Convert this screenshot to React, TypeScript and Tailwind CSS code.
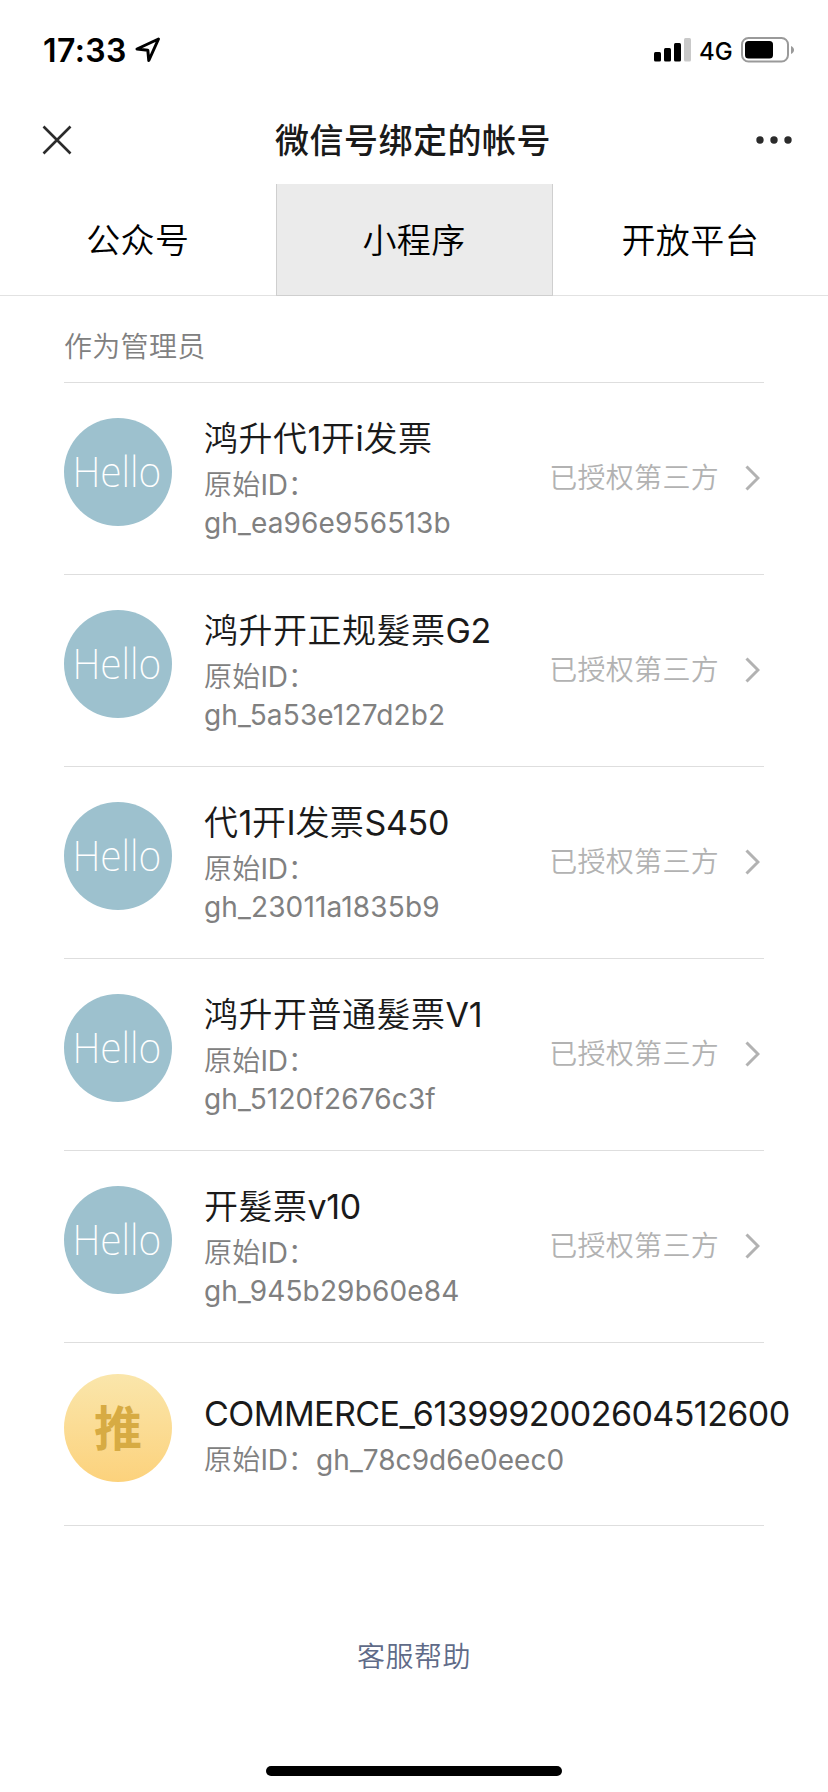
interface Account {
  id: string;
  name: string;
  authorized: boolean;
}

const tabs = ['公众号', '小程序', '开放平台'];

const accounts: Account[] = [
  { id: 'gh_ea96e956513b', name: '鸿升代1开i发票', authorized: true },
  { id: 'gh_5a53e127d2b2', name: '鸿升开正规髮票G2', authorized: true },
  { id: 'gh_23011a1835b9', name: '代1开I发票S450', authorized: true },
  { id: 'gh_5120f2676c3f', name: '鸿升开普通髮票V1', authorized: true },
  { id: 'gh_945b29b60e84', name: '开髮票v10', authorized: true },
  { id: 'gh_78c9d6e0eec0', name: 'COMMERCE_6139992002604512600', authorized: false },
];

function StatusBar() {
  return (
    <div className="flex h-[100px] items-center justify-between pl-[43px] pr-[34px]">
      <div className="flex items-center gap-2">
        <span className="pt-[2px] text-[32px] font-semibold leading-none tracking-[0.4px]">17:33</span>
        <svg className="h-[26px] w-[26px]" viewBox="0 0 26 26" fill="none" stroke="#000" strokeWidth="3" strokeLinejoin="round">
          <path d="M23.500 2L2 12l10.800 1.200L13.800 23.500z" />
        </svg>
      </div>
      <div className="flex items-center">
        <svg className="h-6 w-[37px]" viewBox="0 0 37 24">
          <rect x="0" y="14" width="7" height="9.500" rx="1.500" />
          <rect x="10" y="10" width="7" height="13.500" rx="1.500" />
          <rect x="20" y="5" width="7" height="18.500" rx="1.500" />
          <rect x="30" y="0" width="7" height="23.500" rx="1.500" fill="#c9c9c9" />
        </svg>
        <span className="ml-2 w-[35px] pt-[3px] text-2xl font-medium leading-none">4G</span>
        <svg className="ml-[7px] h-[26px] w-[53px]" viewBox="0 0 53 26">
          <rect x="1" y="1" width="46" height="23.500" rx="6.500" fill="none" stroke="#9a9a9a" strokeWidth="2" />
          <rect x="4" y="4" width="28" height="17.500" rx="3.500" />
          <path d="M50 9c4 1.500 4 6.500 0 8z" fill="#9a9a9a" />
        </svg>
      </div>
    </div>
  );
}

function NavBar() {
  return (
    <div className="flex h-[84px] items-center justify-between px-[42px] pb-[5px]">
      <svg className="h-[30px] w-[30px]" viewBox="0 0 30 30" stroke="#2b2b2b" strokeWidth="2.6">
        <path d="M1.500 1.500l27 27M28.500 1.500l-27 27" />
      </svg>
      <h1 className="pr-[2px] pt-[2px] text-[34px] font-medium leading-none tracking-[0.5px] text-[#1a1a1a]">微信号绑定的帐号</h1>
      <svg className="-mr-[6px] h-2 w-9" viewBox="0 0 36 8" fill="#2b2b2b">
        <circle cx="4" cy="4" r="3.700" />
        <circle cx="18" cy="4" r="3.700" />
        <circle cx="32" cy="4" r="3.700" />
      </svg>
    </div>
  );
}

function Avatar({ authorized }: { authorized: boolean }) {
  if (!authorized) {
    return (
      <div className="flex h-[108px] w-[108px] shrink-0 items-center justify-center rounded-full bg-linear-to-b from-[#fae6ab] to-[#fcd27c] pt-[2px] text-[48px] font-bold leading-none text-[#d7ab43]">
        推
      </div>
    );
  }
  return (
    <div className="flex h-[108px] w-[108px] shrink-0 items-center justify-center rounded-full bg-[#9dc1ce] pb-[3px] pr-[2px]">
      <span className="scale-x-[0.91] font-['Noto_Sans',sans-serif] text-[43px] font-extralight leading-none text-white">Hello</span>
    </div>
  );
}

// Latin runs sit one step heavier than the Chinese text around them
function MixedText({ text }: { text: string }) {
  return text.split(/([\x21-\x7e]+)/).map((part, i) =>
    i % 2 === 1 ? (
      <span key={i} className="font-normal tracking-[-0.3px]">{part}</span>
    ) : (
      part
    )
  );
}

function AccountRow({ account }: { account: Account }) {
  if (!account.authorized) {
    return (
      <li className="flex h-[183px] border-b border-[#dedede] pt-[31px]">
        <Avatar authorized={false} />
        <div className="ml-8 pt-[17px]">
          <p className="whitespace-nowrap text-[34px] font-normal leading-[46px] tracking-[-0.55px] text-[#1a1a1a]">{account.name}</p>
          <p className="whitespace-nowrap text-[28px] leading-[46px] tracking-[0.3px] text-[#808080]">
            <MixedText text="原始ID：" />
            <span className="font-normal tracking-[0.05px]">{account.id}</span>
          </p>
        </div>
      </li>
    );
  }
  return (
    <li className="flex h-48 border-b border-[#dedede] pt-[35px]">
      <Avatar authorized />
      <div className="ml-8 flex-1">
        <p className="whitespace-nowrap text-[34px] leading-[42px] tracking-[0.5px] text-[#1a1a1a]">
          <MixedText text={account.name} />
        </p>
        <div className="mt-[6px] text-[28px] leading-[38px] tracking-[0.3px] text-[#808080]">
          <p><MixedText text="原始ID：" /></p>
          <p className="font-normal tracking-[0.15px]">{account.id}</p>
        </div>
      </div>
      <div className="flex h-[120px] items-center gap-[26px] pr-1">
        <span className="text-[28px] leading-none tracking-[0.3px] text-[#b2b2b2]">已授权第三方</span>
        <svg className="h-[26px] w-[15px]" viewBox="0 0 15 26" fill="none" stroke="#b2b2b2" strokeWidth="3">
          <path d="M1.500 1.500L13 13 1.500 24.500" />
        </svg>
      </div>
    </li>
  );
}

export default function App() {
  return (
    <div className="flex h-[1792px] w-[828px] flex-col overflow-hidden bg-white font-['Inter','Noto_Sans_CJK_SC',sans-serif] font-[350] text-black">
      <StatusBar />
      <NavBar />
      <div className="flex h-28 border-b border-[#e2e2e2]">
        {tabs.map((tab, i) => (
          <button
            key={tab}
            className={
              i === 1
                ? '-mb-px w-[277px] border-x border-b border-[#cfcfcf] bg-[#ebebeb] pt-[2px] text-[34px] tracking-[0.4px]'
                : 'flex-1 pt-[2px] text-[34px] tracking-[0.4px]'
            }
          >
            {tab}
          </button>
        ))}
      </div>

      <main className="px-16">
        <h2 className="h-[87px] border-b border-[#dedede] pt-[31px] text-[28px] leading-10 tracking-[0.3px] text-[#808080]">作为管理员</h2>
        <ul>
          {accounts.map((account) => (
            <AccountRow key={account.id} account={account} />
          ))}
        </ul>
      </main>

      <a className="mt-[111px] text-center text-[28px] leading-10 tracking-[0.5px] text-[#5f6b88]">客服帮助</a>
      <div className="mx-auto mb-4 mt-auto h-[10px] w-[296px] rounded-full bg-black" />
    </div>
  );
}
